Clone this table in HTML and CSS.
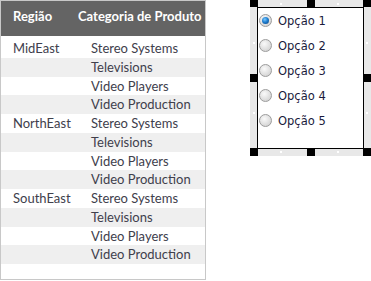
FILE: index.html
```html
<!DOCTYPE html>
<html>
<head>
<meta charset="utf-8">
<link rel="stylesheet" href="styles.css">
</head>
<body>
<div class="page">
  <div class="grid">
    <div class="head">
      <span class="h1">Região</span>
      <span class="h2">Categoria de Produto</span>
    </div>
    <div class="rows">
      <div class="row"><span class="c1">MidEast</span><span>Stereo Systems</span></div>
      <div class="row alt"><span class="c1"></span><span>Televisions</span></div>
      <div class="row"><span class="c1"></span><span>Video Players</span></div>
      <div class="row alt"><span class="c1"></span><span>Video Production</span></div>
      <div class="row"><span class="c1">NorthEast</span><span>Stereo Systems</span></div>
      <div class="row alt"><span class="c1"></span><span>Televisions</span></div>
      <div class="row"><span class="c1"></span><span>Video Players</span></div>
      <div class="row alt"><span class="c1"></span><span>Video Production</span></div>
      <div class="row"><span class="c1">SouthEast</span><span>Stereo Systems</span></div>
      <div class="row alt"><span class="c1"></span><span>Televisions</span></div>
      <div class="row"><span class="c1"></span><span>Video Players</span></div>
      <div class="row alt"><span class="c1"></span><span>Video Production</span></div>
    </div>
  </div>

  <div class="frame">
    <span class="hd tl"></span><span class="hd tc"></span><span class="hd tr"></span>
    <span class="hd ml"></span><span class="hd mr"></span>
    <span class="hd bl"></span><span class="hd bc"></span><span class="hd br"></span>
    <span class="dot t1"></span><span class="dot t2"></span>
    <span class="dot b1"></span><span class="dot b2"></span>
    <span class="dot l1"></span><span class="dot l2"></span>
    <span class="dot r1"></span><span class="dot r2"></span>
    <div class="box">
      <div class="opt"><span class="radio on"></span><span>Opção 1</span></div>
      <div class="opt"><span class="radio"></span><span>Opção 2</span></div>
      <div class="opt"><span class="radio"></span><span>Opção 3</span></div>
      <div class="opt"><span class="radio"></span><span>Opção 4</span></div>
      <div class="opt"><span class="radio"></span><span>Opção 5</span></div>
    </div>
  </div>
</div>
</body>
</html>
```
FILE: styles.css
```css
html, body {
  margin: 0;
  padding: 0;
  background: #fff;
}
.page {
  display: flex;
  align-items: flex-start;
  gap: 44px;
}
.grid {
  width: 204px;
  height: 278px;
  border: 1px solid #c8c8c8;
  font-family: Lato, "Liberation Sans", sans-serif;
  font-size: 13px;
  color: #40404c;
}
.head {
  display: flex;
  background: #646464;
  color: #fff;
  font-weight: bold;
  height: 28px;
  padding: 7px 0 0 12px;
  line-height: 16px;
}
.h1 { width: 65px; }
.rows {
  padding-top: 3px;
}
.row {
  display: flex;
  height: 18.75px;
  line-height: 18.75px;
  padding-left: 12px;
}
.row.alt { background: #efefef; }
.c1 { width: 78px; }

.frame {
  position: relative;
  width: 107px;
  height: 142px;
  padding: 7px;
  background: #e8e8e8;
}
.box {
  box-sizing: border-box;
  width: 107px;
  height: 142px;
  border: 1px solid #000;
  background: #fff;
  padding: 0 0 0 1px;
  font-family: "DejaVu Sans", sans-serif;
  font-size: 11.5px;
  color: #1a1a3c;
}
.opt {
  display: flex;
  align-items: center;
  gap: 6px;
  height: 25px;
}
.radio {
  width: 11px;
  height: 11px;
  border-radius: 50%;
  border: 1px solid #9c9c9c;
  background: radial-gradient(circle at 40% 35%, #fafafa 0%, #e2e2e2 50%, #cacaca 100%);
  position: relative;
  flex: none;
}
.radio.on::after {
  content: "";
  position: absolute;
  left: 2px;
  top: 2px;
  width: 7px;
  height: 7px;
  border-radius: 50%;
  background: radial-gradient(circle at 40% 35%, #7ac8ff 0%, #1f7fd0 45%, #0a3f7a 100%);
}
.hd {
  position: absolute;
  width: 8px;
  height: 8px;
  background: #000;
}
.tl { left: 0; top: -1px; }
.tc { left: 57px; top: -1px; }
.tr { right: 0; top: -1px; }
.ml { left: 0; top: 74px; }
.mr { right: 0; top: 74px; }
.bl { left: 0; bottom: 0; }
.bc { left: 57px; bottom: 0; }
.br { right: 0; bottom: 0; }
.dot {
  position: absolute;
  width: 2px;
  height: 2px;
  background: #fff;
}
.t1 { left: 30px; top: 3px; }
.t2 { left: 87px; top: 3px; }
.b1 { left: 30px; bottom: 3px; }
.b2 { left: 87px; bottom: 3px; }
.l1 { left: 3px; top: 42px; }
.l2 { left: 3px; top: 112px; }
.r1 { right: 3px; top: 42px; }
.r2 { right: 3px; top: 112px; }
```
